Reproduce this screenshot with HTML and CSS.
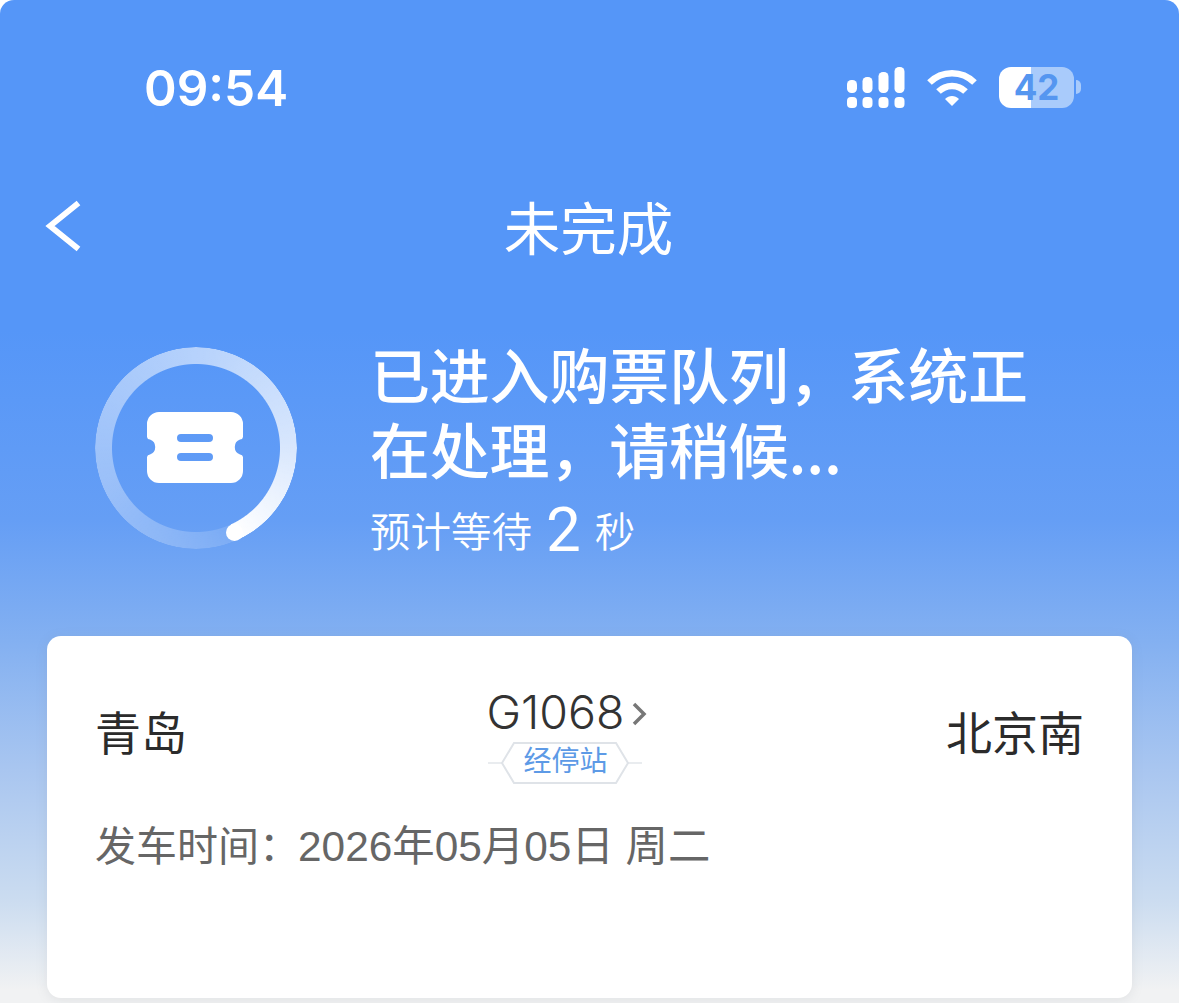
FILE: index.html
```html
<!DOCTYPE html>
<html lang="zh-CN">
<head>
<meta charset="utf-8">
<title>未完成</title>
<link rel="stylesheet" href="styles.css">
</head>
<body>
<main class="screen">
  <header class="status">
    <span class="time">09:54</span>
    <div class="status-icons">
      <svg class="signal" width="58" height="41" viewBox="0 0 58 41" fill="#fff">
        <rect x="0" y="13" width="10" height="13" rx="4.5"/><rect x="15.5" y="10" width="10" height="16" rx="4.5"/><rect x="31.5" y="5" width="10" height="21" rx="4.5"/><rect x="47.5" y="0" width="10" height="26" rx="4.5"/>
        <rect x="0" y="30" width="10" height="11" rx="4"/><rect x="15.5" y="30" width="10" height="11" rx="4"/><rect x="31.5" y="30" width="10" height="11" rx="4"/><rect x="47.5" y="30" width="10" height="11" rx="4"/>
      </svg>
      <svg class="wifi" width="50" height="37" viewBox="0 0 50 37" fill="none" stroke="#fff" stroke-width="6.5">
        <path d="M2.5 13.5C15 1 35 1 47.5 13.5"/>
        <path d="M11.5 22.5C19 15 31 15 38.5 22.5"/>
        <path d="M18 30L25 37L32 30C28 26 22 26 18 30Z" fill="#fff" stroke="none"/>
      </svg>
      <div class="battery">
        <div class="battery-body"><span class="battery-level">42</span></div>
        <span class="battery-nub"></span>
      </div>
    </div>
  </header>

  <nav class="nav">
    <svg class="back" width="36" height="52" viewBox="0 0 36 52" fill="none" stroke="#fff" stroke-width="5.800" stroke-linejoin="miter">
      <path d="M33.500 3L5 26L33.500 49"/>
    </svg>
    <h1 class="nav-title">未完成</h1>
  </nav>

  <section class="hero">
    <div class="ring">
      <div class="ring-track"></div>
      <span class="ring-cap"></span>
      <svg class="ticket" width="96" height="71" viewBox="0 0 96 71">
        <path fill="#fff" fill-rule="evenodd" d="M12 0H84A12 12 0 0 1 96 12V25A3 3 0 0 1 93 27.500A8 8 0 0 0 93 42.500A3 3 0 0 1 96 45V59A12 12 0 0 1 84 71H12A12 12 0 0 1 0 59V45A3 3 0 0 1 3 42.500A8 8 0 0 0 3 27.500A3 3 0 0 1 0 25V12A12 12 0 0 1 12 0ZM34 22A4 4 0 0 0 34 30H62A4 4 0 0 0 62 22ZM34 41A4 4 0 0 0 34 49H62A4 4 0 0 0 62 41Z"/>
      </svg>
    </div>
    <div class="hero-text">
      <h2 class="hero-title">已进入购票队列，系统正在处理，请稍候...</h2>
      <p class="hero-wait">预计等待<span class="hero-num">2</span>秒</p>
    </div>
  </section>

  <section class="card">
    <div class="route">
      <span class="station">青岛</span>
      <div class="train">
        <div class="train-no">G1068<svg class="chevron" width="15" height="24" viewBox="0 0 15 24" fill="none" stroke="#777" stroke-width="3.500"><path d="M2 2L12 12L2 22"/></svg></div>
        <div class="stops">
          <svg class="stops-frame" width="154" height="42" viewBox="0 0 154 42" fill="none" stroke="#dfe3e8" stroke-width="2">
            <path d="M0 21H14M140 21H154" stroke="#e9ecef"/>
            <path d="M14 21L26 1H128L140 21L128 41H26Z" fill="#fff"/>
          </svg>
          <span class="stops-label">经停站</span>
        </div>
      </div>
      <span class="station">北京南</span>
    </div>
    <p class="depart">发车时间：<span class="depart-date">2026年05月05日 周二</span></p>
  </section>
</main>
</body>
</html>
```
FILE: styles.css
```css
* { box-sizing: border-box; }
html, body { margin: 0; padding: 0; background: #fff; }
body { font-family: "Noto Sans CJK SC", "Liberation Sans", sans-serif; }

.screen {
  width: 1179px;
  height: 1003px;
  overflow: hidden;
  border-radius: 14px 14px 0 0;
  background: linear-gradient(180deg, #5596f8 0, #5596f8 330px, #659ef5 520px, #83b0f1 640px, #a9c6f0 770px, #cbdcf0 900px, #f1f2f3 990px);
}

.status {
  height: 176px;
  display: flex;
  align-items: center;
  justify-content: space-between;
  padding: 0 98px 0 144px;
}
.time {
  font-family: Inter, "Liberation Sans", sans-serif;
  font-size: 49.500px;
  font-weight: 600;
  color: #fff;
  margin-top: -1px;
}
.status-icons { display: flex; align-items: center; margin-top: -2px; }
.signal { margin-right: 22px; }
.wifi { margin-right: 22px; }
.battery { display: flex; align-items: center; gap: 2px; }
.battery-body {
  width: 75px;
  height: 41px;
  border-radius: 12px;
  background: linear-gradient(90deg, #fff 0, #fff 43%, #a9cbfb 43%, #a9cbfb 100%);
  display: flex;
  align-items: center;
  justify-content: center;
}
.battery-level {
  font-family: Inter, "Liberation Sans", sans-serif;
  font-size: 35px;
  font-weight: 700;
  color: #5596f0;
}
.battery-nub {
  width: 5px;
  height: 14px;
  border-radius: 0 7px 7px 0;
  background: #a9cbfb;
}

.nav {
  height: 104px;
  display: flex;
  align-items: center;
  justify-content: center;
  position: relative;
}
.back { position: absolute; left: 45px; top: 24px; }
.nav-title {
  margin: -7px 2px 0 0;
  font-size: 56.500px;
  font-weight: 400;
  line-height: 72px;
  color: #fff;
}

.hero {
  height: 356px;
  padding: 67px 0 0 95px;
  display: flex;
  align-items: flex-start;
  gap: 73px;
}
.ring {
  width: 202px;
  height: 202px;
  flex: none;
  position: relative;
  display: flex;
  align-items: center;
  justify-content: center;
}
.ring-track {
  position: absolute;
  inset: 0;
  border-radius: 50%;
  background: conic-gradient(from 155.7deg, rgba(255,255,255,.12) 0deg, rgba(255,255,255,.36) 90deg, rgba(255,255,255,.56) 200deg, rgba(255,255,255,.75) 290deg, #fff 360deg);
  -webkit-mask: radial-gradient(circle, transparent 83.5px, #000 84.5px, #000 100.5px, transparent 101.500px);
  mask: radial-gradient(circle, transparent 83.5px, #000 84.5px, #000 100.5px, transparent 101.500px);
}
.ring-cap {
  position: absolute;
  left: 130.5px;
  top: 176.5px;
  width: 17px;
  height: 17px;
  border-radius: 50%;
  background: #fff;
}
.ticket { position: relative; left: -1px; top: -1px; }

.hero-text { width: 680px; margin-top: -12px; color: #fff; }
.hero-title {
  margin: 0;
  font-size: 60px;
  font-weight: 500;
  line-height: 75px;
  letter-spacing: -0.2px;
}
.hero-wait {
  margin: 11px 0 0;
  display: flex;
  align-items: center;
  font-size: 40.500px;
  font-weight: 350;
  line-height: 68px;
  color: #fff;
}
.hero-num {
  margin: 0 14px;
  font-family: Roboto, "Liberation Sans", sans-serif;
  font-size: 62px;
  font-weight: 400;
}

.card {
  width: 1085px;
  height: 362px;
  margin-left: 47px;
  padding: 50px 48px 0;
  background: #fff;
  border-radius: 14px;
  box-shadow: 0 2px 12px rgba(130, 135, 145, .14);
}
.route {
  display: flex;
  justify-content: space-between;
  align-items: flex-start;
}
.station {
  margin-top: 11px;
  font-size: 46px;
  line-height: 66px;
  color: #2b2b2b;
}
.train { display: flex; flex-direction: column; align-items: center; }
.train-no {
  display: flex;
  align-items: center;
  gap: 7px;
  font-family: Inter, "Liberation Sans", sans-serif;
  font-size: 46.500px;
  font-weight: 300;
  line-height: 52px;
  color: #333;
}
.chevron { margin-top: 3px; }
.stops {
  position: relative;
  width: 154px;
  height: 42px;
  margin: 4px 2px 0 0;
  display: flex;
  align-items: center;
  justify-content: center;
}
.stops-frame { position: absolute; left: 0; top: 0; }
.stops-label {
  position: relative;
  top: -4px;
  font-size: 28px;
  line-height: 38px;
  color: #5d9ae6;
}
.depart {
  margin: 32px 0 0;
  font-size: 41px;
  line-height: 54px;
  color: #666;
}
.depart-date {
  margin-left: -2px;
  font-family: "Liberation Sans", "Noto Sans CJK SC", sans-serif;
  font-size: 42.400px;
}
```
